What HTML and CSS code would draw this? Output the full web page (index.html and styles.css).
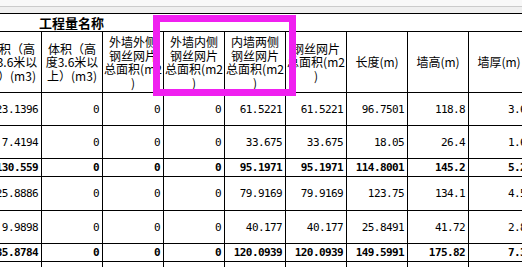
FILE: index.html
```html
<!DOCTYPE html>
<html lang="zh-CN">
<head>
    <meta charset="UTF-8">
    <title>工程量</title>
    <link rel="stylesheet" href="styles.css">
</head>
<body>
    <div class="sheet">
        <div class="topbar"></div>
        <table class="grid">
            <colgroup>
                <col><col><col><col><col><col><col><col><col>
            </colgroup>
            <tr class="title">
                <td colspan="9">工程量名称</td>
            </tr>
            <tr class="head">
                <td>体积（高<br>度3.6米以<br>下）(m3)</td>
                <td>体积（高<br>度3.6米以<br>上）(m3)</td>
                <td>外墙外侧<br>钢丝网片<br>总面积(m2<br>)</td>
                <td>外墙内侧<br>钢丝网片<br>总面积(m2<br>)</td>
                <td>内墙两侧<br>钢丝网片<br>总面积(m2<br>)</td>
                <td>钢丝网片<br>总面积(m2<br>)</td>
                <td>长度(m)</td>
                <td>墙高(m)</td>
                <td>墙厚(m)</td>
            </tr>
            <tr class="row">
                <td>123.1396</td><td>0</td><td>0</td><td>0</td><td>61.5221</td><td>61.5221</td><td>96.7501</td><td>118.8</td><td>3.6</td>
            </tr>
            <tr class="row">
                <td>7.4194</td><td>0</td><td>0</td><td>0</td><td>33.675</td><td>33.675</td><td>18.05</td><td>26.4</td><td>1.6</td>
            </tr>
            <tr class="total">
                <td>130.559</td><td>0</td><td>0</td><td>0</td><td>95.1971</td><td>95.1971</td><td>114.8001</td><td>145.2</td><td>5.2</td>
            </tr>
            <tr class="row tall">
                <td>125.8886</td><td>0</td><td>0</td><td>0</td><td>79.9169</td><td>79.9169</td><td>123.75</td><td>134.1</td><td>4.5</td>
            </tr>
            <tr class="row">
                <td>9.9898</td><td>0</td><td>0</td><td>0</td><td>40.177</td><td>40.177</td><td>25.8491</td><td>41.72</td><td>2.8</td>
            </tr>
            <tr class="total">
                <td>135.8784</td><td>0</td><td>0</td><td>0</td><td>120.0939</td><td>120.0939</td><td>149.5991</td><td>175.82</td><td>7.3</td>
            </tr>
            <tr class="row">
                <td></td><td></td><td></td><td></td><td></td><td></td><td></td><td></td><td></td>
            </tr>
        </table>
        <div class="mark"></div>
    </div>
</body>
</html>
```

FILE: styles.css
```css
body {
    margin: 0;
    background: #ffffff;
}
.sheet {
    position: relative;
    width: 522px;
    height: 267px;
    overflow: hidden;
    background: #ffffff;
}
.topbar {
    height: 13px;
    background: linear-gradient(#f8f8f8 0 6px, #cbcbcb 6px 7px, #efefef 7px);
}
.grid {
    border-collapse: collapse;
    table-layout: fixed;
    width: 549px;
    margin-left: -20px;
    color: #000000;
}
.grid col {
    width: 61px;
}
.grid td {
    border: 1px solid #000000;
    padding: 0 3px;
    overflow: hidden;
    white-space: nowrap;
}
.title td {
    height: 17px;
    padding-left: 58px;
    font-family: "Noto Sans CJK SC", sans-serif;
    font-size: 13px;
    font-weight: bold;
    line-height: 16px;
}
.head td {
    height: 60px;
    padding: 0;
    text-align: center;
    font-family: "Noto Sans CJK SC", sans-serif;
    font-size: 12px;
    line-height: 13.5px;
}
.row td,
.total td {
    text-align: right;
    font-family: "DejaVu Sans Mono", monospace;
    font-size: 11px;
    letter-spacing: -0.6px;
}
.row td {
    height: 32px;
}
.row.tall td {
    height: 33px;
}
.total td {
    height: 17px;
    font-weight: bold;
}
.mark {
    position: absolute;
    left: 153px;
    top: 15px;
    width: 129px;
    height: 67px;
    border: 7px solid #f020f0;
}
```
